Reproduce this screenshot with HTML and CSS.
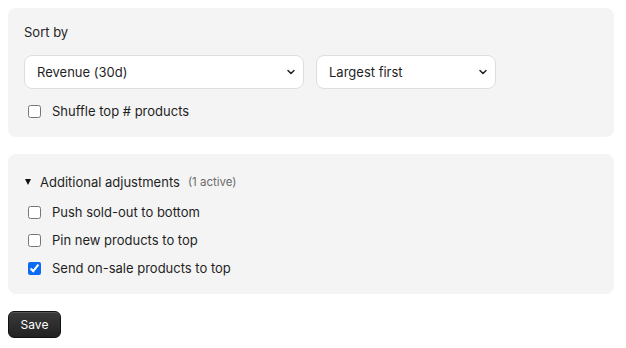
FILE: index.html
```html
<!DOCTYPE html>
<html lang="en">
<head>
    <meta charset="UTF-8">
    <meta name="viewport" content="width=device-width, initial-scale=1.0">
    <title>Sort settings</title>
    <link rel="stylesheet" href="styles.css">
</head>
<body>
    <!-- Sort by -->
    <div class="panel">
        <div class="panel-title">Sort by</div>
        <div class="select-row">
            <div class="select-wrap wide">
                <select class="select">
                    <option>Revenue (30d)</option>
                    <option>Units sold (30d)</option>
                    <option>Newest</option>
                </select>
                <svg class="chevron" width="10" height="10" viewBox="0 0 10 10"><path d="M2 3.5 L5 6.5 L8 3.5" fill="none" stroke="#222" stroke-width="1.5" stroke-linecap="round" stroke-linejoin="round"/></svg>
            </div>
            <div class="select-wrap narrow">
                <select class="select">
                    <option>Largest first</option>
                    <option>Smallest first</option>
                </select>
                <svg class="chevron" width="10" height="10" viewBox="0 0 10 10"><path d="M2 3.5 L5 6.5 L8 3.5" fill="none" stroke="#222" stroke-width="1.5" stroke-linecap="round" stroke-linejoin="round"/></svg>
            </div>
        </div>
        <label class="check"><input type="checkbox"> Shuffle top # products</label>
    </div>

    <!-- Additional adjustments -->
    <div class="panel">
        <details open>
            <summary>Additional adjustments <span class="muted">(1 active)</span></summary>
            <div class="check-list">
                <label class="check"><input type="checkbox"> Push sold-out to bottom</label>
                <label class="check"><input type="checkbox"> Pin new products to top</label>
                <label class="check"><input type="checkbox" checked> Send on-sale products to top</label>
            </div>
        </details>
    </div>

    <button class="save">Save</button>
</body>
</html>
```

FILE: styles.css
```css
body {
    font-family: Inter, "Noto Sans", sans-serif;
    font-size: 13px;
    color: #1f1f1f;
    margin: 8px 12px 8px 8px;
    background: #fff;
}
.panel {
    background: #f4f4f4;
    border-radius: 8px;
    padding: 16px;
    margin-bottom: 17px;
    display: flex;
    flex-direction: column;
}
.panel-title {
    line-height: 16px;
    margin-bottom: 15px;
}
.select-row {
    display: flex;
    gap: 12px;
    margin-bottom: 12px;
}
.select-wrap {
    position: relative;
}
.wide { width: 280px; }
.narrow { width: 180px; }
.select {
    appearance: none;
    width: 100%;
    height: 34px;
    font-family: inherit;
    font-size: 13px;
    color: #1f1f1f;
    background: #fff;
    border: 1px solid #dedede;
    border-radius: 8px;
    padding: 0 28px 0 12px;
}
.chevron {
    position: absolute;
    right: 8px;
    top: 12px;
    pointer-events: none;
}
.check {
    display: flex;
    align-items: center;
    gap: 8px;
    height: 20px;
}
.check input {
    width: 13px;
    height: 13px;
    margin: 0 3px 0 4px;
    accent-color: #0b6bf2;
}
details summary {
    height: 24px;
    display: flex;
    align-items: center;
    list-style: none;
    cursor: pointer;
    margin-bottom: 8px;
}
details summary::before {
    content: "";
    border-left: 3px solid transparent;
    border-right: 3px solid transparent;
    border-top: 6px solid #111;
    margin: 0 9px 0 1px;
}
.muted {
    color: #6b6b6b;
    font-size: 11.5px;
    margin-left: 8px;
}
.check-list {
    display: flex;
    flex-direction: column;
    gap: 8px;
}
.save {
    font-family: inherit;
    font-size: 12px;
    color: #fff;
    background: linear-gradient(#3a3a3a, #222);
    border: 1px solid #111;
    border-radius: 6px;
    height: 27px;
    width: 53px;
    padding: 0;
    box-shadow: inset 0 1px 0 rgba(255,255,255,0.15);
}
```
